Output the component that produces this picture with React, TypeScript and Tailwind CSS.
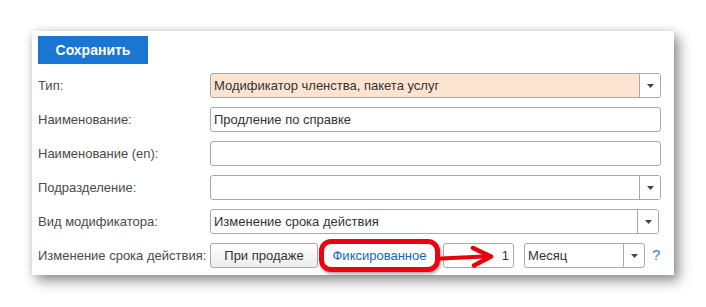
import React from "react";

const font = { fontFamily: '"Liberation Sans", Arial, sans-serif' };

function Caret() {
  return (
    <svg width="7" height="4" viewBox="0 0 7 4" className="text-[#444]">
      <path d="M0 0h7L3.5 4z" fill="currentColor" />
    </svg>
  );
}

function Field({
  value = "",
  dropdown = false,
  tinted = false,
}: {
  value?: string;
  dropdown?: boolean;
  tinted?: boolean;
}) {
  return (
    <div
      className={`flex h-[25px] flex-1 items-stretch overflow-hidden rounded-[3px] border border-[#a9a9a9] ${
        tinted ? "bg-[#fde4d1]" : "bg-white"
      }`}
    >
      <div className="flex flex-1 items-center px-[3px] text-[13px] text-[#333]">{value}</div>
      {dropdown && (
        <div className="flex w-[21px] items-center justify-center border-l border-[#a9a9a9] bg-white">
          <Caret />
        </div>
      )}
    </div>
  );
}

function Row({ label, children }: { label: string; children: React.ReactNode }) {
  return (
    <div className="flex h-[25px] items-center">
      <div className="w-[172px] shrink-0 text-[13px] text-[#4a4a4a]">{label}</div>
      {children}
    </div>
  );
}

export default function App() {
  return (
    <div className="h-[307px] w-[706px] bg-white pl-[32px] pt-[31px]" style={font}>
      <div className="relative flex h-[244px] w-[642px] flex-col gap-[9px] bg-white pb-[7px] pl-[6px] pr-[13px] pt-[5px] shadow-[5px_6px_12px_rgba(0,0,0,0.42),0_0_8px_rgba(0,0,0,0.12)]">
        <button className="h-[28px] w-[110px] bg-[#1976d2] text-[14px] font-bold text-white">
          Сохранить
        </button>

        <div className="flex flex-col gap-[9px]">
          <Row label="Тип:">
            <Field value="Модификатор членства, пакета услуг" dropdown tinted />
          </Row>
          <Row label="Наименование:">
            <Field value="Продление по справке" />
          </Row>
          <Row label="Наименование (en):">
            <Field />
          </Row>
          <Row label="Подразделение:">
            <Field dropdown />
          </Row>
          <Row label="Вид модификатора:">
            <div className="flex flex-1 pr-[2px]">
              <Field value="Изменение срока действия" dropdown />
            </div>
          </Row>
          <Row label="Изменение срока действия:">
            <div className="flex items-center">
              <button className="h-[25px] w-[108px] rounded-[3px] border border-[#a9a9a9] bg-gradient-to-b from-white to-[#ececec] text-[13px] text-[#333]">
                При продаже
              </button>
              <div className="ml-[1px] flex h-[33px] w-[121px] items-center justify-center rounded-[12px] border-[5px] border-[#ee0010] bg-white shadow-[1px_2px_3px_rgba(0,0,0,0.35)]">
                <span className="text-[13px] text-[#1565c0]">Фиксированное</span>
              </div>
              <div className="ml-[3px] flex h-[25px] w-[71px] items-center justify-end rounded-[3px] border border-[#a9a9a9] bg-white pr-[4px] text-[13px] text-[#333]">
                1
              </div>
              <div className="ml-[10px] flex h-[25px] w-[121px] items-stretch overflow-hidden rounded-[3px] border border-[#a9a9a9] bg-white">
                <div className="flex flex-1 items-center px-[3px] text-[13px] text-[#333]">Месяц</div>
                <div className="flex w-[21px] items-center justify-center border-l border-[#a9a9a9]">
                  <Caret />
                </div>
              </div>
              <span className="ml-[7px] text-[15px] text-[#1e88e5]">?</span>
            </div>
          </Row>
        </div>

        {/* red arrow overlay */}
        <svg
          className="absolute left-[408px] top-[214px]"
          width="56"
          height="24"
          viewBox="0 0 56 24"
        >
          <path d="M1 13.5L44 11.5" stroke="#e8000b" strokeWidth="4" strokeLinecap="round" fill="none" />
          <path d="M33 3L51 11.5L34 20.5" stroke="#e8000b" strokeWidth="4.5" strokeLinecap="round" strokeLinejoin="round" fill="none" />
        </svg>
      </div>
    </div>
  );
}
